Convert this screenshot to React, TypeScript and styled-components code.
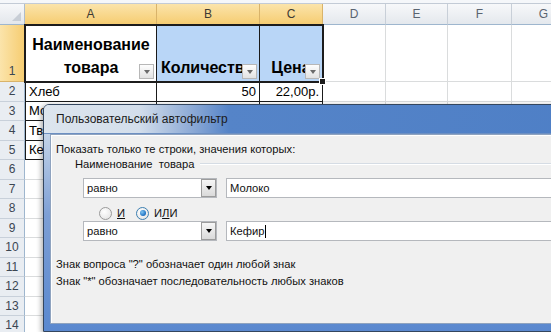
import React from 'react';
import styled, { createGlobalStyle, css } from 'styled-components';

const GlobalStyle = createGlobalStyle`
  html, body {
    margin: 0;
    padding: 0;
    overflow: hidden;
    background: #fff;
  }
`;

const COLS = [25, 132, 103, 63, 63, 62, 64, 64];
const LETTERS = ['A', 'B', 'C', 'D', 'E', 'F', 'G'];
const ROW_COUNT = 14;

type Align = 'left' | 'center' | 'right';

interface CellData {
    text?: string;
    align?: Align;
    fill?: string;
}

const HEAD: CellData[] = [
    { text: 'Наименование товара', align: 'center' },
    { text: 'Количество', align: 'left', fill: '#b9d6f7' },
    { text: 'Цена', align: 'center', fill: '#b9d6f7' },
];

// only what shows from under the dialog
const ROWS: string[][] = [
    ['Хлеб', '50', '22,00р.'],
    ['Молоко', '', ''],
    ['Творог', '', ''],
    ['Кефир', '', ''],
];

const Page = styled.div`
    position: relative;
    width: 551px;
    height: 332px;
    overflow: hidden;
    font-family: 'Liberation Sans', Arial, sans-serif;
`;

const TopStrip = styled.div`
    height: 4px;
    box-sizing: border-box;
    background: #f5f7fa;
    border-bottom: 1px solid #c3cbd6;
`;

const Sheet = styled.div`
    display: grid;
    grid-template-columns: ${COLS.map((c) => `${c}px`).join(' ')};
    grid-template-rows: 21px 57px repeat(${ROW_COUNT - 1}, 19.5px);
`;

const headBase = css`
    box-sizing: border-box;
    display: flex;
    align-items: center;
    justify-content: center;
    color: #2b3440;
    font-size: 11px;
`;

const Corner = styled.div`
    ${headBase};
    position: relative;
    background: linear-gradient(#f7f8fa, #e3e7ec);
    border-right: 1px solid #aebccc;
    border-bottom: 1px solid #9eb6ce;

    &::after {
        content: '';
        position: absolute;
        right: 3px;
        bottom: 3px;
        border-left: 9px solid transparent;
        border-bottom: 9px solid #c8ced6;
    }
`;

const ColHead = styled.div<{ $sel?: boolean }>`
    ${headBase};
    font-size: 12px;
    background: ${(p) => (p.$sel ? 'linear-gradient(#fbe4ab, #f6cd72)' : 'linear-gradient(#f7f8fa, #e4e8ed)')};
    color: ${(p) => (p.$sel ? '#3d3a33' : '#5a6470')};
    border-right: 1px solid ${(p) => (p.$sel ? '#d9b36a' : '#c8cfd8')};
    border-bottom: 1px solid ${(p) => (p.$sel ? '#c9a04f' : '#9eb6ce')};
`;

const RowHead = styled.div<{ $sel?: boolean }>`
    ${headBase};
    font-size: 12px;
    align-items: ${(p) => (p.$sel ? 'flex-end' : 'center')};
    padding-bottom: ${(p) => (p.$sel ? '3px' : '0')};
    background: ${(p) => (p.$sel ? 'linear-gradient(90deg, #fbe4ab, #f6cd72)' : '#e9edf2')};
    color: #3b4652;
    border-right: 1px solid ${(p) => (p.$sel ? '#c9a04f' : '#9eb6ce')};
    border-bottom: 1px solid ${(p) => (p.$sel ? '#d9b36a' : '#c8d0da')};
`;

const Cell = styled.div<{ $align?: Align; $fill?: string; $boxed?: boolean; $first?: boolean }>`
    position: relative;
    box-sizing: border-box;
    overflow: hidden;
    display: flex;
    align-items: flex-end;
    justify-content: ${(p) => (p.$align === 'right' ? 'flex-end' : p.$align === 'center' ? 'center' : 'flex-start')};
    padding: 0 3px 1px;
    font-size: 13px;
    line-height: 17px;
    white-space: nowrap;
    color: #000;
    background: ${(p) => p.$fill || '#fff'};
    border-right: 1px solid ${(p) => (p.$boxed ? '#1a1a1a' : '#dadcdd')};
    border-bottom: 1px solid ${(p) => (p.$boxed ? '#1a1a1a' : '#dadcdd')};
    border-left: ${(p) => (p.$first ? '1px solid #1a1a1a' : 'none')};
`;

const HeadCell = styled(Cell)`
    padding: 0 4px 2px;
    font-size: 16px;
    font-weight: 700;
    line-height: 23px;
    text-align: ${(p) => p.$align || 'left'};
    white-space: ${(p) => (p.$align === 'center' ? 'normal' : 'nowrap')};
`;

const FilterButton = styled.span`
    position: absolute;
    right: 2px;
    bottom: 2px;
    width: 15px;
    height: 15px;
    box-sizing: border-box;
    border: 1px solid #b7b7b7;
    background: linear-gradient(#fdfdfd, #e2e2e2);
    display: flex;
    align-items: center;
    justify-content: center;

    &::after {
        content: '';
        border-left: 3.5px solid transparent;
        border-right: 3.5px solid transparent;
        border-top: 4px solid #6b6b6b;
    }
`;

const Selection = styled.div`
    position: absolute;
    left: 24px;
    top: 24px;
    width: 300px;
    height: 59px;
    box-sizing: border-box;
    border: 2px solid #1c1c1c;
    pointer-events: none;

    &::after {
        content: '';
        position: absolute;
        right: -4px;
        bottom: -4px;
        width: 5px;
        height: 5px;
        background: #1c1c1c;
        border: 1px solid #fff;
    }
`;

/* ---------- dialog ---------- */

const Dialog = styled.div`
    position: absolute;
    left: 43px;
    top: 104px;
    width: 560px;
    height: 228px;
    box-sizing: border-box;
    border: 1px solid #34465e;
    border-radius: 6px 6px 0 0;
    padding: 0 6px 7px 6px;
    display: flex;
    flex-direction: column;
    background: linear-gradient(#cfdbea 0, #c3d3e8 30px, #7d9fd5 110px, #5a88cf 100%);
    box-shadow: -2px 1px 5px rgba(0, 0, 0, 0.3);
    font-family: 'Liberation Sans', Arial, sans-serif;
    font-size: 11.2px;
    color: #111;
`;

const TitleBar = styled.div`
    height: 28px;
    margin: 0 -6px;
    padding: 0 12px;
    border-radius: 5px 5px 0 0;
    display: flex;
    align-items: center;
    font-size: 12px;
    color: #1b1b1b;
    background: linear-gradient(90deg, #dde5ee 0, #d3deeb 95px, #8aa8d5 150px, #5584c8 185px, #4e7fc6 100%);
    border-bottom: 1px solid #6c8fc2;
`;

const Body = styled.div`
    flex: 1;
    box-sizing: border-box;
    background: #f0f0f0;
    border: 1px solid #8fa3bf;
    box-shadow: inset 1px 1px 0 #fff;
    padding: 7px 0 0 5px;
    display: flex;
    flex-direction: column;
`;

const Line = styled.div`
    line-height: 14px;
    white-space: nowrap;
`;

const GroupHeader = styled.div`
    display: flex;
    align-items: center;
    gap: 6px;
    margin: 1px 0 0 19px;
    line-height: 14px;
    white-space: nowrap;

    &::after {
        content: '';
        flex: 1;
        height: 0;
        border-top: 1px solid #d5dce4;
        border-bottom: 1px solid #fff;
    }
`;

const ConditionRow = styled.div<{ $top: number }>`
    display: flex;
    gap: 9px;
    margin: ${(p) => p.$top}px 0 0 27px;
    height: 20px;
`;

const Select = styled.div`
    width: 134px;
    box-sizing: border-box;
    display: flex;
    background: #fff;
    border: 1px solid #b5b8bd;
`;

const SelectValue = styled.span`
    flex: 1;
    padding-left: 3px;
    line-height: 18px;
`;

const DropButton = styled.span`
    width: 15px;
    box-sizing: border-box;
    border: 1px solid #9c9c9c;
    background: linear-gradient(#f6f6f6, #dadada);
    display: flex;
    align-items: center;
    justify-content: center;

    &::after {
        content: '';
        border-left: 3.5px solid transparent;
        border-right: 3.5px solid transparent;
        border-top: 4px solid #000;
    }
`;

const TextInput = styled.div`
    flex: 1;
    box-sizing: border-box;
    background: #fff;
    border: 1px solid #b5b8bd;
    padding-left: 3px;
    line-height: 18px;
    display: flex;
    align-items: center;
`;

const Caret = styled.span`
    width: 1px;
    height: 13px;
    background: #000;
    margin-left: 1px;
`;

const RadioRow = styled.div`
    display: flex;
    align-items: center;
    height: 16px;
    margin: 7px 0 0 43px;
`;

const RadioOption = styled.label`
    display: flex;
    align-items: center;
    gap: 5px;
    margin-right: 11px;
`;

const RadioCircle = styled.span<{ $on?: boolean }>`
    width: 13px;
    height: 13px;
    box-sizing: border-box;
    border-radius: 50%;
    border: 1px solid ${(p) => (p.$on ? '#3c7fb1' : '#9a9a9a')};
    background: radial-gradient(circle at 40% 35%, #fff 0, #e6e6e6 80%);
    display: flex;
    align-items: center;
    justify-content: center;

    &::after {
        content: '';
        display: ${(p) => (p.$on ? 'block' : 'none')};
        width: 6px;
        height: 6px;
        border-radius: 50%;
        background: radial-gradient(circle at 35% 35%, #7fc4f2 0, #1b6fc1 70%, #0e4f94 100%);
    }
`;

const Hints = styled.div`
    margin-top: 15px;
    line-height: 17px;
    white-space: nowrap;
`;

const Sheets: React.FC = () => (
    <Sheet>
        <Corner />
        {LETTERS.map((l, i) => (
            <ColHead key={l} $sel={i < 3}>
                {l}
            </ColHead>
        ))}

        <RowHead $sel>1</RowHead>
        {HEAD.map((c, i) => (
            <HeadCell key={i} $align={c.align} $fill={c.fill} $boxed $first={i === 0}>
                {c.text}
                <FilterButton />
            </HeadCell>
        ))}
        {LETTERS.slice(3).map((l) => (
            <Cell key={l} />
        ))}

        {Array.from({ length: ROW_COUNT - 1 }, (_, r) => {
            const data = ROWS[r];
            return (
                <React.Fragment key={r}>
                    <RowHead>{r + 2}</RowHead>
                    {LETTERS.map((l, i) => (
                        <Cell
                            key={l}
                            $boxed={!!data && i < 3}
                            $first={!!data && i === 0}
                            $align={i === 0 ? 'left' : 'right'}
                        >
                            {data && i < 3 ? data[i] : ''}
                        </Cell>
                    ))}
                </React.Fragment>
            );
        })}
    </Sheet>
);

const AutoFilterDialog: React.FC = () => (
    <Dialog>
        <TitleBar>Пользовательский автофильтр</TitleBar>
        <Body>
            <Line>Показать только те строки, значения которых:</Line>
            <GroupHeader>Наименование&nbsp; товара</GroupHeader>
            <ConditionRow $top={7}>
                <Select>
                    <SelectValue>равно</SelectValue>
                    <DropButton />
                </Select>
                <TextInput>Молоко</TextInput>
            </ConditionRow>
            <RadioRow>
                <RadioOption>
                    <RadioCircle />
                    <span>
                        <u>И</u>
                    </span>
                </RadioOption>
                <RadioOption>
                    <RadioCircle $on />
                    <span>
                        И<u>Л</u>И
                    </span>
                </RadioOption>
            </RadioRow>
            <ConditionRow $top={0}>
                <Select>
                    <SelectValue>равно</SelectValue>
                    <DropButton />
                </Select>
                <TextInput>
                    Кефир
                    <Caret />
                </TextInput>
            </ConditionRow>
            <Hints>
                <div>Знак вопроса "?" обозначает один любой знак</div>
                <div>Знак "*" обозначает последовательность любых знаков</div>
            </Hints>
        </Body>
    </Dialog>
);

const App: React.FC = () => (
    <Page>
        <GlobalStyle />
        <TopStrip />
        <Sheets />
        <Selection />
        <AutoFilterDialog />
    </Page>
);

export default App;
